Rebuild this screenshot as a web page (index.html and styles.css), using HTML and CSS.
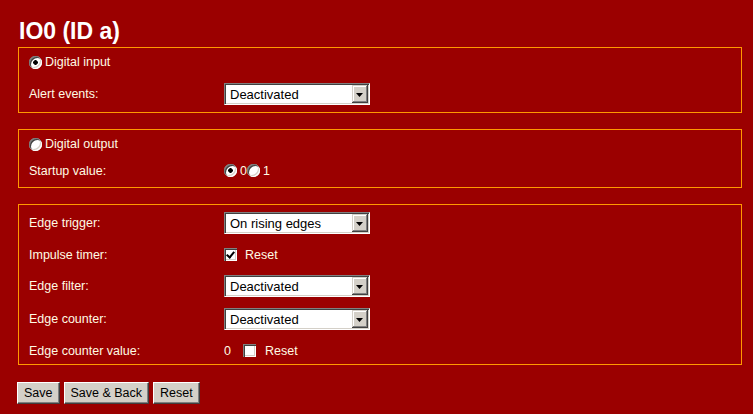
FILE: index.html
```html
<!DOCTYPE html>
<html lang="en">
<head>
<meta charset="utf-8">
<title>IO0 (ID a)</title>
<link rel="stylesheet" href="styles.css">
</head>
<body>
<main class="page">
  <h1 class="title">IO0 (ID a)</h1>
  <form class="config">
    <div class="box box-input">
      <label class="mode"><input type="radio" class="radio" name="mode" checked>Digital input</label>
      <div class="row row-select">
        <span class="label">Alert events:</span>
        <span class="combo"><select class="select"><option>Deactivated</option><option>Activated</option></select></span>
      </div>
    </div>

    <div class="box box-output">
      <label class="mode"><input type="radio" class="radio" name="mode">Digital output</label>
      <div class="row row-small">
        <span class="label">Startup value:</span>
        <span class="value">
          <input type="radio" class="radio" name="startup" checked><span class="opt">0</span><input type="radio" class="radio" name="startup"><span class="opt">1</span>
        </span>
      </div>
    </div>

    <div class="box box-edges">
      <div class="row row-select">
        <span class="label">Edge trigger:</span>
        <span class="combo"><select class="select"><option>On rising edges</option><option>On falling edges</option></select></span>
      </div>
      <div class="row row-small">
        <span class="label">Impulse timer:</span>
        <label class="value"><input type="checkbox" class="check" checked><span class="check-text">Reset</span></label>
      </div>
      <div class="row row-select">
        <span class="label">Edge filter:</span>
        <span class="combo"><select class="select"><option>Deactivated</option></select></span>
      </div>
      <div class="row row-select">
        <span class="label">Edge counter:</span>
        <span class="combo"><select class="select"><option>Deactivated</option></select></span>
      </div>
      <div class="row row-small">
        <span class="label">Edge counter value:</span>
        <span class="value"><span class="count">0</span><label class="value"><input type="checkbox" class="check"><span class="check-text count-reset">Reset</span></label></span>
      </div>
    </div>

    <div class="actions">
      <button type="submit" class="btn">Save</button>
      <button type="submit" class="btn">Save &amp; Back</button>
      <button type="reset" class="btn">Reset</button>
    </div>
  </form>
</main>
</body>
</html>
```

FILE: styles.css
```css
html, body {
  margin: 0;
  padding: 0;
  background: #9b0000;
}

body {
  font-family: "Liberation Sans", Arial, sans-serif;
  font-size: 12.5px;
  color: #fffbe4;
}

.page {
  width: 724px;
  padding: 19px 0 0 18px;
}

.title {
  margin: 0 0 4px 1px;
  font-size: 23px;
  line-height: 24px;
  font-weight: bold;
  color: #fff;
}

.config {
  display: flex;
  flex-direction: column;
  gap: 16px;
}

/* framed groups */
.box {
  border: 1px solid #f90;
  display: flex;
  flex-direction: column;
}

.box-input {
  padding: 4px 10px 7px;
  gap: 11px;
}

.box-output {
  padding: 4px 10px 7px;
  gap: 7px;
}

.box-edges {
  padding: 7px 10px 4px;
  gap: 11px;
}

.mode {
  height: 20px;
  display: flex;
  align-items: center;
}

.mode .radio {
  margin-right: 3px;
}

.row {
  display: grid;
  grid-template-columns: 195px auto;
  align-items: center;
}

.row-select { height: 22px; }
.row-small { height: 19px; }

.value {
  display: flex;
  align-items: center;
}

.opt { margin-left: 3px; }

.count { width: 19px; }

.check-text { margin-left: 8px; }
.count-reset { margin-left: 9px; }

/* classic 3D combo box */
.combo {
  position: relative;
  display: flex;
  width: 146px;
}

.select {
  appearance: none;
  -webkit-appearance: none;
  box-sizing: border-box;
  width: 146px;
  height: 22px;
  margin: 0;
  padding: 0 0 0 5px;
  border: 1px solid;
  border-color: #808080 #fff #fff #808080;
  box-shadow: inset 1px 1px #404040, inset -1px -1px #d4d0c8;
  border-radius: 0;
  background: #fff;
  color: #000;
  font-family: "Liberation Sans", Arial, sans-serif;
  font-size: 13px;
  outline: none;
}

.combo::after {
  content: "";
  position: absolute;
  top: 2px;
  right: 2px;
  width: 16px;
  height: 18px;
  background: #d4d0c8;
  box-shadow: inset -1px -1px #404040, inset 1px 1px #d4d0c8, inset -2px -2px #808080, inset 2px 2px #fff;
  pointer-events: none;
}

.combo::before {
  content: "";
  position: absolute;
  top: 10px;
  right: 7px;
  width: 7px;
  height: 4px;
  background: #000;
  clip-path: polygon(0 0, 100% 0, 50% 100%);
  z-index: 1;
  pointer-events: none;
}

/* classic radio */
.radio {
  appearance: none;
  -webkit-appearance: none;
  width: 13px;
  height: 13px;
  margin: 0;
  border-radius: 50%;
  background: #fff;
  box-shadow: inset 1px 1px #808080, inset 2px 2px #404040, inset -1px -1px #fff, inset -2px -2px #d4d0c8;
}

.radio:checked {
  background: radial-gradient(circle at 50% 50%, #000 0 2px, #fff 2.6px);
}

/* classic checkbox */
.check {
  appearance: none;
  -webkit-appearance: none;
  position: relative;
  width: 13px;
  height: 13px;
  margin: 0;
  background: #fff;
  box-shadow: inset 1px 1px #808080, inset 2px 2px #404040, inset -1px -1px #fff, inset -2px -2px #d4d0c8;
}

.check:checked::after {
  content: "";
  position: absolute;
  left: 4px;
  top: 2px;
  width: 3px;
  height: 6px;
  border: solid #000;
  border-width: 0 2px 2px 0;
  transform: rotate(40deg);
}

/* buttons */
.actions {
  display: flex;
  gap: 4px;
  margin-top: 1px;
  margin-left: -1px;
}

.btn {
  height: 22px;
  margin: 0;
  padding: 0 6px;
  font-family: "Liberation Sans", Arial, sans-serif;
  font-size: 12.5px;
  color: #000;
  background: #d4d0c8;
  border: 1px solid;
  border-color: #fff #404040 #404040 #fff;
  box-shadow: inset -1px -1px #808080;
  border-radius: 0;
}
```
